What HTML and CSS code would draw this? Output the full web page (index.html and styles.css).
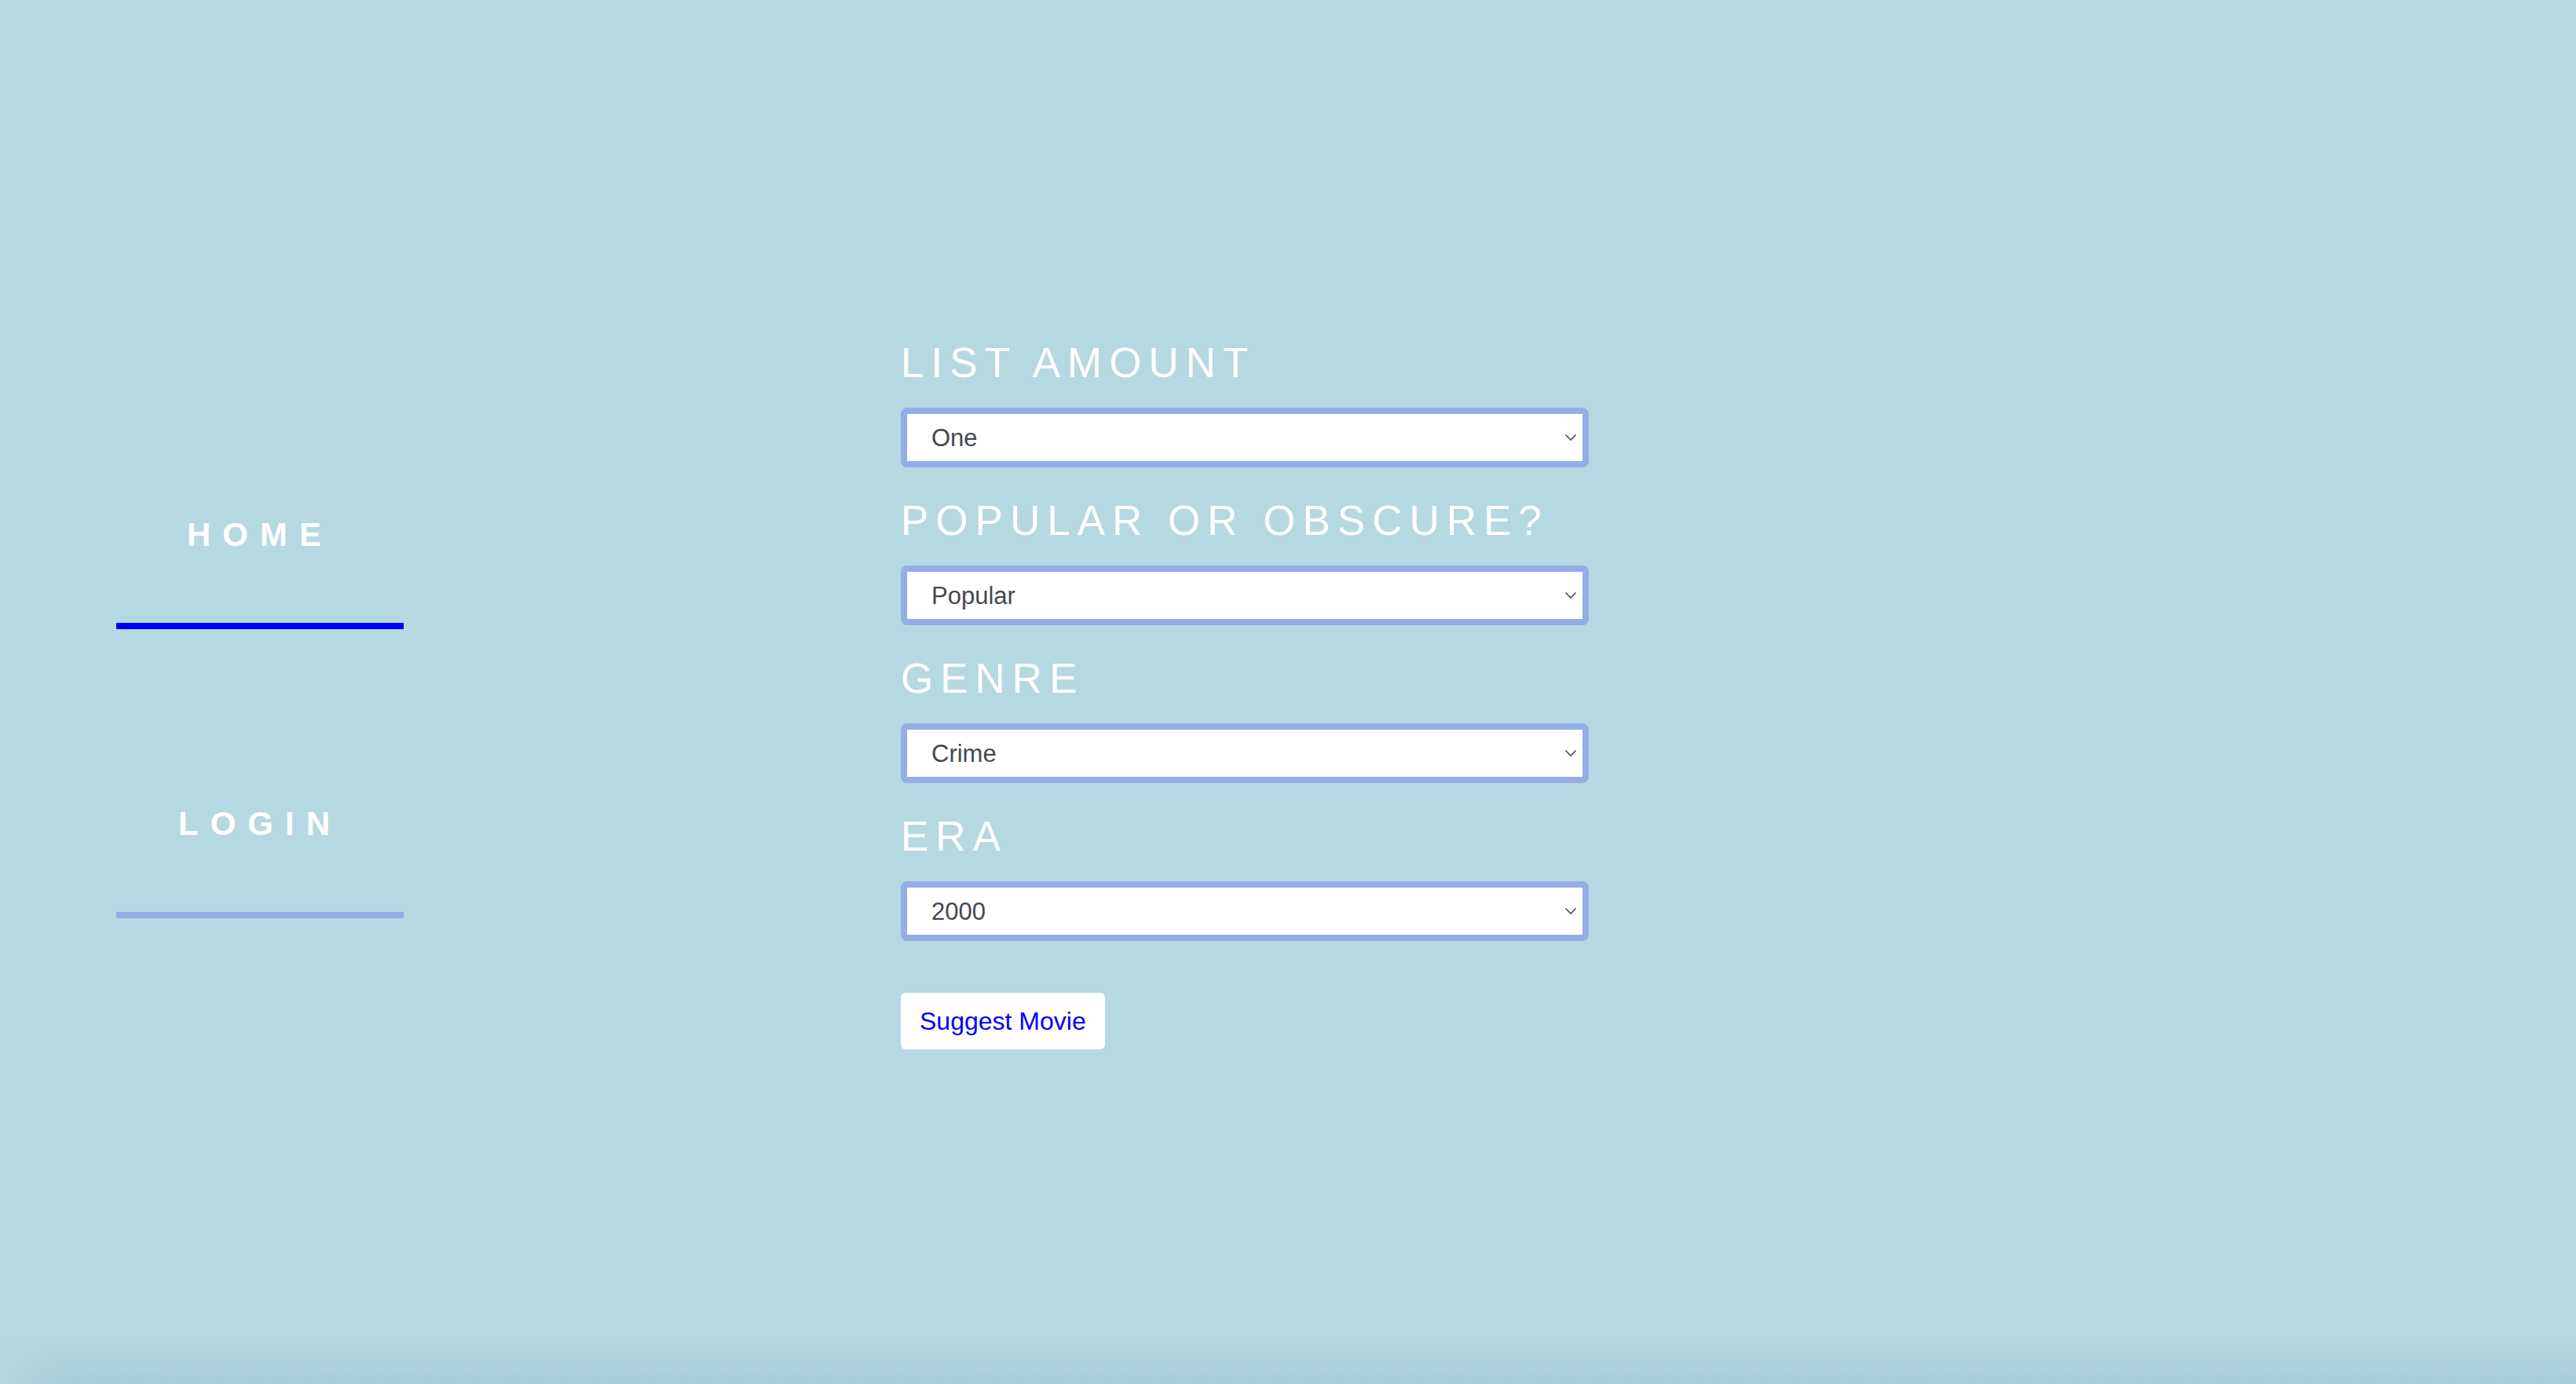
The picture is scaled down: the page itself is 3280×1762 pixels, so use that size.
FILE: index.html
```html
<!DOCTYPE html>
<html lang="en">
<head>
<meta charset="utf-8">
<title>Movie Suggester</title>
<link rel="stylesheet" href="styles.css">
</head>
<body>
<div class="page">
  <nav class="nav">
    <div class="nav-item">
      <a class="nav-link" href="#">HOME</a>
      <div class="nav-bar nav-bar-active"></div>
    </div>
    <div class="nav-item">
      <a class="nav-link" href="#">LOGIN</a>
      <div class="nav-bar"></div>
    </div>
  </nav>
  <form class="form">
    <div class="field">
      <label class="field-label">LIST AMOUNT</label>
      <div class="select-wrap">
        <select class="select"><option>One</option></select>
        <svg class="chevron" width="16" height="10" viewBox="0 0 16 10"><polyline points="1.5,1.5 8,8 14.5,1.5" fill="none" stroke="#4a4d52" stroke-width="1.6"/></svg>
      </div>
    </div>
    <div class="field">
      <label class="field-label">POPULAR OR OBSCURE?</label>
      <div class="select-wrap">
        <select class="select"><option>Popular</option></select>
        <svg class="chevron" width="16" height="10" viewBox="0 0 16 10"><polyline points="1.5,1.5 8,8 14.5,1.5" fill="none" stroke="#4a4d52" stroke-width="1.6"/></svg>
      </div>
    </div>
    <div class="field">
      <label class="field-label">GENRE</label>
      <div class="select-wrap">
        <select class="select"><option>Crime</option></select>
        <svg class="chevron" width="16" height="10" viewBox="0 0 16 10"><polyline points="1.5,1.5 8,8 14.5,1.5" fill="none" stroke="#4a4d52" stroke-width="1.6"/></svg>
      </div>
    </div>
    <div class="field">
      <label class="field-label">ERA</label>
      <div class="select-wrap">
        <select class="select"><option>2000</option></select>
        <svg class="chevron" width="16" height="10" viewBox="0 0 16 10"><polyline points="1.5,1.5 8,8 14.5,1.5" fill="none" stroke="#4a4d52" stroke-width="1.6"/></svg>
      </div>
    </div>
    <button class="submit" type="button">Suggest Movie</button>
  </form>
</div>
</body>
</html>
```
FILE: styles.css
```css
html, body {
  margin: 0;
  padding: 0;
  height: 100%;
  overflow: hidden;
  background: #b6d8e3;
  font-family: "Liberation Sans", Arial, sans-serif;
}
.page {
  display: flex;
  align-items: flex-start;
  height: 100vh;
  box-sizing: border-box;
  padding-left: 148px;
  background:
    linear-gradient(to right, rgba(182, 216, 227, 0.9), rgba(182, 216, 227, 0) 90px) left bottom / 100% 60px no-repeat,
    linear-gradient(to bottom, rgba(40, 90, 110, 0) 0, rgba(40, 90, 110, 0.03) 30%, rgba(40, 90, 110, 0.1) 100%) left bottom / 100% 60px no-repeat,
    #b6d8e3;
}
.nav {
  width: 366px;
  padding-top: 656px;
  display: flex;
  flex-direction: column;
  gap: 223px;
}
.nav-item {
  display: flex;
  flex-direction: column;
}
.nav-link {
  display: block;
  text-align: center;
  color: #ffffff;
  text-decoration: none;
  font-weight: bold;
  font-size: 42px;
  line-height: 50px;
  letter-spacing: 15px;
  padding-left: 15px;
  margin-left: -15px;
  margin-bottom: 87px;
}
.nav-bar {
  height: 8px;
  background: #93aee6;
}
.nav-bar-active {
  background: #0000ff;
}
.form {
  margin-left: 633px;
  padding-top: 432px;
  display: flex;
  flex-direction: column;
  align-items: flex-start;
}
.field {
  display: flex;
  flex-direction: column;
  margin-bottom: 38px;
}
.field-label {
  color: #ffffff;
  font-size: 53px;
  line-height: 60px;
  letter-spacing: 9px;
  margin-bottom: 27px;
}
.select-wrap {
  position: relative;
  width: 876px;
}
.select {
  appearance: none;
  -webkit-appearance: none;
  display: block;
  box-sizing: border-box;
  width: 876px;
  height: 76px;
  border: 8px solid #93aee6;
  border-radius: 8px;
  background: #ffffff;
  color: #45484e;
  font-family: "Liberation Sans", Arial, sans-serif;
  font-size: 31px;
  padding: 0 0 0 31px;
  outline: none;
}
.chevron {
  position: absolute;
  right: 15px;
  top: 33px;
}
.submit {
  margin-top: 28px;
  height: 72px;
  padding: 0 24px;
  border: none;
  border-radius: 6px;
  background: #ffffff;
  color: #0000ff;
  font-family: "Liberation Sans", Arial, sans-serif;
  font-size: 32px;
  line-height: 72px;
}
```
